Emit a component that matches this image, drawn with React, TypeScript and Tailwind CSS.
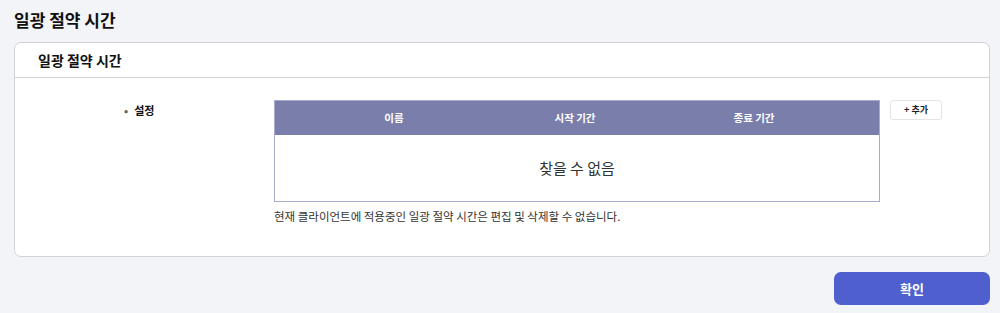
import React from "react";

const columns = [
  { label: "이름", width: "w-[238px]" },
  { label: "시작 기간", width: "w-[124px]" },
  { label: "종료 기간", width: "w-[234px]" },
];

export default function App() {
  return (
    <div
      className="min-h-[313px] w-[1000px] bg-[#f3f4f8] pl-[14px] pr-[10px] pt-[9px] text-[#222]"
      style={{ fontFamily: '"Noto Sans CJK KR", "Noto Sans", sans-serif' }}
    >
      <h1 className="text-[17px] font-bold leading-[22px] text-[#111]">일광 절약 시간</h1>

      {/* Card */}
      <div className="mt-[11px] rounded-[7px] border border-[#d2d2d6] bg-white">
        <div className="border-b border-[#d2d2d6] px-[23px] py-[6px] text-[14px] font-bold leading-[22px] text-[#111]">
          일광 절약 시간
        </div>

        <div className="flex pt-[22px] pb-[31px]">
          <div className="w-[259px] shrink-0 pl-[109px] text-[11px] font-bold leading-[20px] text-[#111]">
            <span className="mr-[6px] text-[#666]">•</span>설정
          </div>

          <div className="w-[606px] shrink-0">
            <div className="border border-[#a9acd0]">
              <div className="flex h-[34px] items-center bg-[#7a7eab] text-[10.5px] font-bold text-white">
                {columns.map((c) => (
                  <div key={c.label} className={`${c.width} text-center`}>
                    {c.label}
                  </div>
                ))}
              </div>
              <div className="flex h-[66px] items-center justify-center text-[15px] text-[#333]">
                찾을 수 없음
              </div>
            </div>
            <p className="mt-[6px] text-[11.5px] leading-[17px] text-[#333]">
              현재 클라이언트에 적용중인 일광 절약 시간은 편집 및 삭제할 수 없습니다.
            </p>
          </div>

          <div className="pl-[10px]">
            <button className="flex h-[20px] w-[52px] items-center justify-center rounded-[3px] border border-[#e4e4e8] bg-white text-[9px] font-bold text-[#222]">
              + 추가
            </button>
          </div>
        </div>
      </div>

      {/* Footer */}
      <div className="mt-[15px] flex justify-end">
        <button className="h-[33px] w-[156px] rounded-[7px] bg-[#4f5fcd] text-[13px] font-bold text-white">
          확인
        </button>
      </div>
    </div>
  );
}
